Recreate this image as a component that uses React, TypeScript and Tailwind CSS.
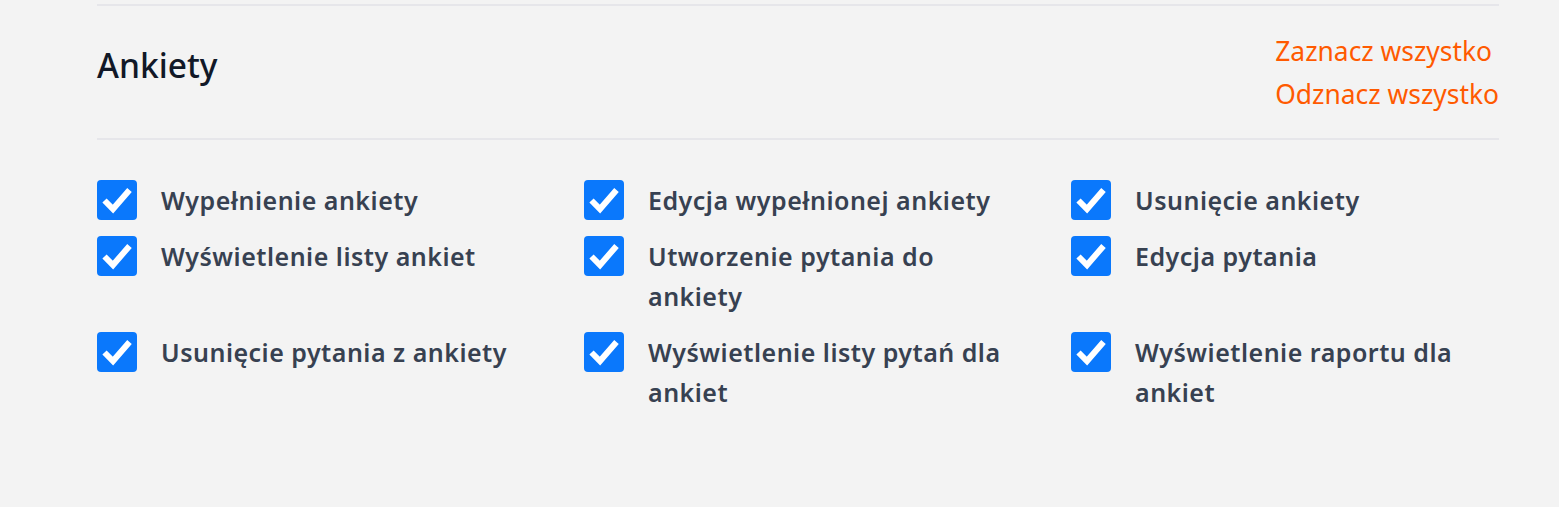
const items = [
  'Wypełnienie ankiety',
  'Edycja wypełnionej ankiety',
  'Usunięcie ankiety',
  'Wyświetlenie listy ankiet',
  'Utworzenie pytania do ankiety',
  'Edycja pytania',
  'Usunięcie pytania z ankiety',
  'Wyświetlenie listy pytań dla ankiet',
  'Wyświetlenie raportu dla ankiet',
];

function CheckBox() {
  return (
    <span className="flex h-[40px] w-[40px] shrink-0 items-center justify-center rounded-[4px] bg-[#0a78fc]">
      <svg width="40" height="40" viewBox="0 0 40 40">
        <polyline
          points="7.5,20.5 16,29 32.5,10"
          fill="none"
          stroke="#ffffff"
          strokeWidth="6"
          strokeLinecap="butt"
          strokeLinejoin="miter"
        />
      </svg>
    </span>
  );
}

export default function App() {
  return (
    <div
      className="min-h-[507px] w-full bg-[#f3f3f3]"
      style={{ fontFamily: '"Noto Sans", "Open Sans", sans-serif' }}
    >
      <div className="ml-[97px] w-[1402px] pt-[4px]">
        <div className="flex items-start justify-between border-y-2 border-[#e6e6ea] pt-[24px] pb-[22px]">
          <h2 className="mt-[15px] text-[33.5px] font-medium leading-[40px] text-[#111827]">Ankiety</h2>
          <div className="flex flex-col text-[26.4px] leading-[43px] text-[#ff5a00]">
            <a className="cursor-pointer">Zaznacz wszystko</a>
            <a className="cursor-pointer">Odznacz wszystko</a>
          </div>
        </div>
        <div className="mt-[40px] grid grid-cols-3 gap-x-[59px] gap-y-4">
          {items.map((t) => (
            <label key={t} className="flex items-start gap-6">
              <CheckBox />
              <span className="text-[25px] font-semibold leading-[40px] tracking-[0.5px] text-[#374151]">{t}</span>
            </label>
          ))}
        </div>
      </div>
    </div>
  );
}
